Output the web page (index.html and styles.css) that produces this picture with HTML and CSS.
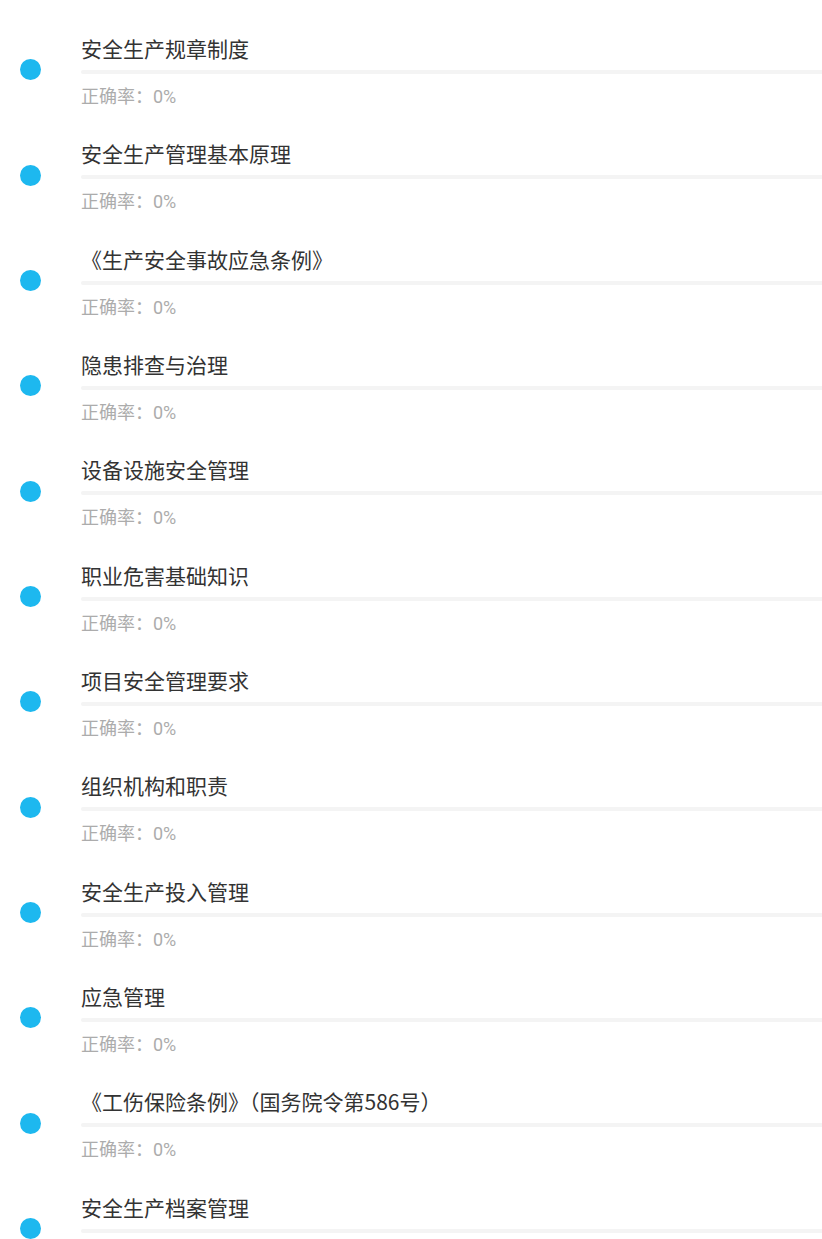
FILE: index.html
```html
<!DOCTYPE html>
<html lang="zh-CN">
<head>
<meta charset="utf-8">
<link rel="stylesheet" href="styles.css">
</head>
<body>
<ul class="list">
  <li class="row"><span class="dot"></span><div class="info"><div class="title">安全生产规章制度</div><div class="bar"></div><div class="rate">正确率：0%</div></div></li>
  <li class="row"><span class="dot"></span><div class="info"><div class="title">安全生产管理基本原理</div><div class="bar"></div><div class="rate">正确率：0%</div></div></li>
  <li class="row"><span class="dot"></span><div class="info"><div class="title">《生产安全事故应急条例》</div><div class="bar"></div><div class="rate">正确率：0%</div></div></li>
  <li class="row"><span class="dot"></span><div class="info"><div class="title">隐患排查与治理</div><div class="bar"></div><div class="rate">正确率：0%</div></div></li>
  <li class="row"><span class="dot"></span><div class="info"><div class="title">设备设施安全管理</div><div class="bar"></div><div class="rate">正确率：0%</div></div></li>
  <li class="row"><span class="dot"></span><div class="info"><div class="title">职业危害基础知识</div><div class="bar"></div><div class="rate">正确率：0%</div></div></li>
  <li class="row"><span class="dot"></span><div class="info"><div class="title">项目安全管理要求</div><div class="bar"></div><div class="rate">正确率：0%</div></div></li>
  <li class="row"><span class="dot"></span><div class="info"><div class="title">组织机构和职责</div><div class="bar"></div><div class="rate">正确率：0%</div></div></li>
  <li class="row"><span class="dot"></span><div class="info"><div class="title">安全生产投入管理</div><div class="bar"></div><div class="rate">正确率：0%</div></div></li>
  <li class="row"><span class="dot"></span><div class="info"><div class="title">应急管理</div><div class="bar"></div><div class="rate">正确率：0%</div></div></li>
  <li class="row"><span class="dot"></span><div class="info"><div class="title">《工伤保险条例》（国务院令第586号）</div><div class="bar"></div><div class="rate">正确率：0%</div></div></li>
  <li class="row"><span class="dot"></span><div class="info"><div class="title">安全生产档案管理</div><div class="bar"></div><div class="rate">正确率：0%</div></div></li>
</ul>
</body>
</html>
```
FILE: styles.css
```css
html, body {
  margin: 0;
  padding: 0;
  background: #ffffff;
  font-family: "Noto Sans CJK SC", "Noto Sans", sans-serif;
  overflow: hidden;
}
.list {
  list-style: none;
  margin: 0;
  padding: 17.6px 0 0 0;
}
.row {
  height: 105.333px;
  display: flex;
  align-items: flex-start;
}
.dot {
  flex: none;
  width: 21px;
  height: 21px;
  border-radius: 50%;
  background: #1db8ef;
  margin: 41.9px 40.5px 0 19.5px;
}
.info {
  flex: 1;
  min-width: 0;
  margin-top: 15.4px;
}
.title {
  font-size: 21px;
  line-height: 30px;
  color: #333333;
  white-space: nowrap;
}
.bar {
  height: 4px;
  margin: 7px 0 11px;
  background: #f4f4f4;
  border-radius: 2px 0 0 2px;
}
.rate {
  font-family: Roboto, "Noto Sans CJK SC", sans-serif;
  font-size: 18px;
  line-height: 24px;
  color: #acacac;
}
```
